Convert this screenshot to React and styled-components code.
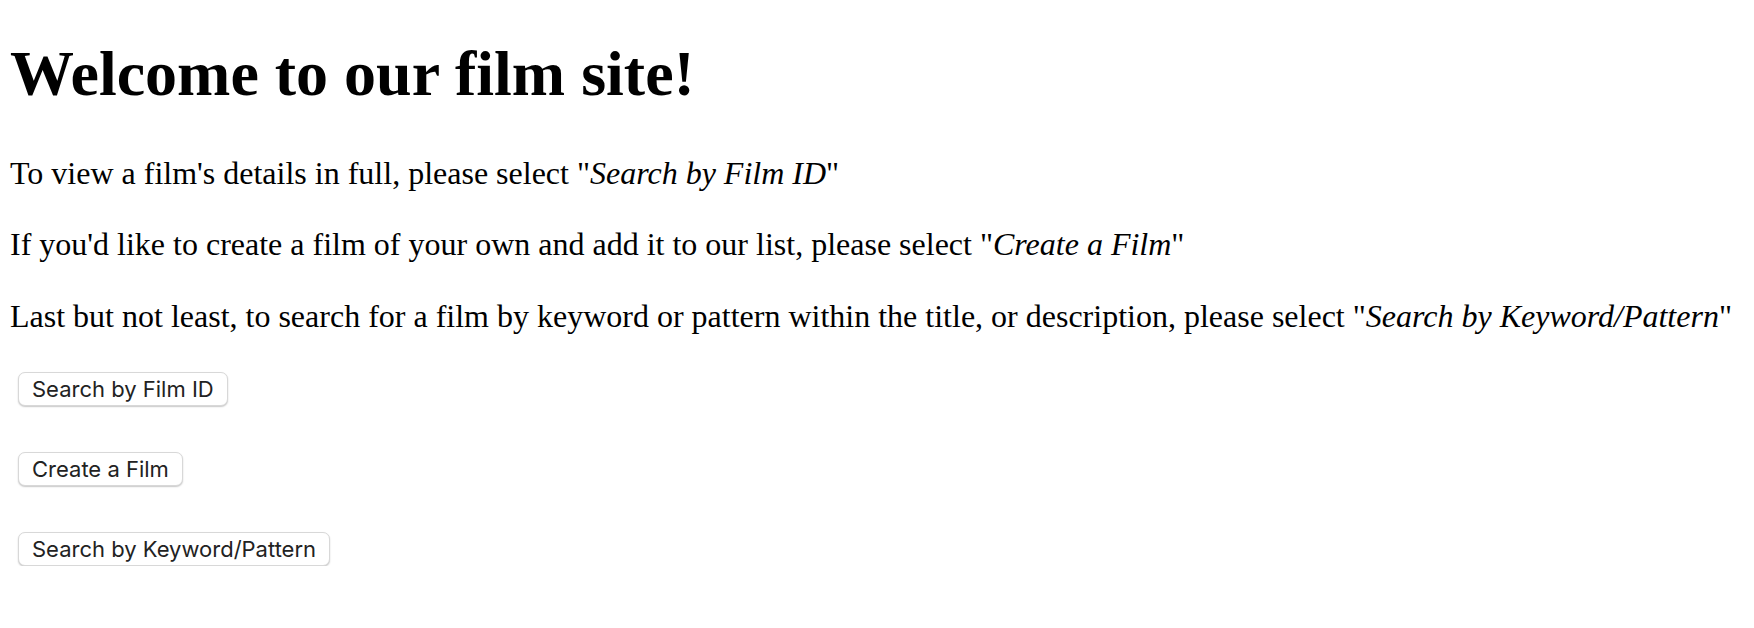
import React from "react";
import styled, { createGlobalStyle } from "styled-components";

const GlobalStyle = createGlobalStyle`
  html, body {
    margin: 0;
    padding: 0;
    background: #ffffff;
  }
  body {
    font-family: "Liberation Serif", "Times New Roman", serif;
    color: #000000;
  }
`;

const Page = styled.div`
  padding: 0 10px;
`;

const Title = styled.h1`
  margin: 0;
  padding-top: 37px;
  font-size: 64px;
  font-weight: 700;
  line-height: 1.15;
`;

const Intro = styled.p`
  margin: 44px 0 0 0;
  font-size: 32px;
  line-height: 1.15;
  & + & {
    margin-top: 35px;
  }
`;

const Choice = styled.em`
  font-style: italic;
`;

const Buttons = styled.div`
  display: flex;
  flex-direction: column;
  align-items: flex-start;
  gap: 46px;
  margin-top: 37px;
  padding-left: 8px;
`;

const Button = styled.button`
  height: 34px;
  padding: 0 13px;
  font-family: "Inter", "Liberation Sans", Arial, sans-serif;
  font-size: 22px;
  color: #222222;
  background: #ffffff;
  border: 1px solid #d8d8d8;
  border-radius: 7px;
  box-shadow: 0 1px 1.5px rgba(0, 0, 0, 0.22);
  cursor: pointer;
`;

export default function App() {
  return (
    <Page>
      <GlobalStyle />
      <Title>Welcome to our film site!</Title>
      <Intro>
        To view a film's details in full, please select "
        <Choice>Search by Film ID</Choice>"
      </Intro>
      <Intro>
        If you'd like to create a film of your own and add it to our list,
        please select "<Choice>Create a Film</Choice>"
      </Intro>
      <Intro>
        Last but not least, to search for a film by keyword or pattern within
        the title, or description, please select "
        <Choice>Search by Keyword/Pattern</Choice>"
      </Intro>
      <Buttons>
        <Button>Search by Film ID</Button>
        <Button>Create a Film</Button>
        <Button>Search by Keyword/Pattern</Button>
      </Buttons>
    </Page>
  );
}
